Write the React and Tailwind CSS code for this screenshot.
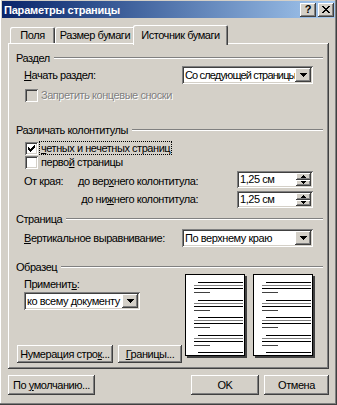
import React from "react";

const RAISED =
  "shadow-[inset_-1px_-1px_#404040,inset_1px_1px_#ffffff,inset_-2px_-2px_#808080,inset_2px_2px_#d4d0c8]";
const SUNKEN =
  "shadow-[inset_1px_1px_#808080,inset_-1px_-1px_#ffffff,inset_2px_2px_#404040,inset_-2px_-2px_#d4d0c8]";

function U({ children }) {
  return <span className="underline decoration-1 underline-offset-[1px]">{children}</span>;
}

function Header({ children }) {
  return (
    <div className="flex items-center h-[12px]">
      <span className="whitespace-nowrap">{children}</span>
      <div className="flex-1 ml-[4px] h-[2px] border-t border-b border-t-[#808080] border-b-white" />
    </div>
  );
}

function DownTri() {
  return (
    <svg width="7" height="4" shapeRendering="crispEdges">
      <path d="M0 0h7v1h-1v1h-1v1h-1v1h-1v-1h-1v-1h-1v-1h-1z" fill="#000" />
    </svg>
  );
}

function Select({ value, className, textClass = "" }) {
  return (
    <div className={`flex items-center h-[18px] bg-white p-[2px] ${SUNKEN} ${className}`}>
      <span className={`flex-1 pl-[1px] whitespace-nowrap overflow-hidden leading-[14px] ${textClass}`}>{value}</span>
      <div className={`w-[16px] h-full shrink-0 bg-[#d4d0c8] flex items-center justify-center ${RAISED}`}>
        <DownTri />
      </div>
    </div>
  );
}

function Spin({ value }) {
  return (
    <div className={`flex h-[17px] w-[76px] bg-white p-[2px] ${SUNKEN}`}>
      <span className="flex-1 pl-[1px] leading-[13px] whitespace-nowrap">{value}</span>
      <div className="flex flex-col w-[15px]">
        <div className={`flex-1 flex items-center justify-center bg-[#d4d0c8] ${RAISED}`}>
          <svg width="5" height="3" shapeRendering="crispEdges">
            <path d="M2 0h1v1h1v1h1v1h-5v-1h1v-1h1z" fill="#000" />
          </svg>
        </div>
        <div className={`flex-1 flex items-center justify-center bg-[#d4d0c8] ${RAISED}`}>
          <svg width="5" height="3" shapeRendering="crispEdges">
            <path d="M0 0h5v1h-1v1h-1v1h-1v-1h-1v-1h-1z" fill="#000" />
          </svg>
        </div>
      </div>
    </div>
  );
}

const CHECK = [
  [6, 0], [5, 1], [6, 1], [0, 2], [4, 2], [5, 2], [6, 2],
  [0, 3], [1, 3], [3, 3], [4, 3], [5, 3],
  [0, 4], [1, 4], [2, 4], [3, 4], [4, 4],
  [1, 5], [2, 5], [3, 5], [2, 6],
];

function Check({ checked, disabled }) {
  return (
    <div
      className={`w-[13px] h-[13px] shrink-0 flex items-center justify-center ${
        disabled ? "bg-[#d4d0c8]" : "bg-white"
      } ${SUNKEN}`}
    >
      {checked && (
        <svg width="7" height="7" shapeRendering="crispEdges">
          {CHECK.map(([x, y]) => (
            <rect key={`${x}-${y}`} x={x} y={y} width="1" height="1" fill="#000" />
          ))}
        </svg>
      )}
    </div>
  );
}

function Btn({ children, className }) {
  return (
    <div className={`flex items-center justify-center bg-[#d4d0c8] whitespace-nowrap ${RAISED} ${className}`}>
      <span>{children}</span>
    </div>
  );
}

function Page() {
  const paras = [7, 25, 42, 60, 77];
  return (
    <div className="w-[60px] h-[82px] bg-white border border-black shadow-[2px_2px_0_#404040]">
      <svg width="58" height="80" shapeRendering="crispEdges">
        {paras.map((p) => (
          <g key={p}>
            <rect x="12" y={p} width="45" height="1" fill="#000" />
            <rect x="8" y={p + 3} width="49" height="1" fill="#808080" />
            <rect x="8" y={p + 6} width="49" height="1" fill="#000" />
            <rect x="8" y={p + 10} width="16" height="1" fill="#404040" />
          </g>
        ))}
      </svg>
    </div>
  );
}

export default function App() {
  return (
    <div
      className="w-[337px] h-[405px] bg-[#d4d0c8] flex flex-col pt-[1px] px-[2px] pb-[2px] text-[11px] tracking-[-0.45px] text-black shadow-[inset_-1px_-1px_#404040,inset_-2px_-2px_#808080,inset_1px_0_#ffffff]"
      style={{ fontFamily: '"Liberation Sans", Arial, sans-serif' }}
    >
      {/* Title bar */}
      <div className="h-[17px] flex items-center pl-[2px] pr-[1px] bg-gradient-to-r from-[#0a246a] to-[#a6caf0]">
        <span className="flex-1 font-bold text-white leading-[14px] whitespace-nowrap tracking-[-0.2px]">
          Параметры страницы
        </span>
        <div className="flex gap-[2px]">
          <Btn className="w-[16px] h-[14px]">
            <span className="font-bold text-[11px] leading-[11px]">?</span>
          </Btn>
          <Btn className="w-[16px] h-[14px]">
            <svg width="8" height="7" shapeRendering="crispEdges" className="block">
              <path
                d="M0 0h2v1h1v1h2v-1h1v-1h2v1h-1v1h-1v1h-1v1h1v1h1v1h1v1h-2v-1h-1v-1h-2v1h-1v1h-2v-1h1v-1h1v-1h1v-1h-1v-1h-1v-1h-1z"
                fill="#000"
              />
            </svg>
          </Btn>
        </div>
      </div>

      {/* Body */}
      <div className="flex-1 flex flex-col px-[6px] pt-[7px]">
        {/* Tabs */}
        <div className="flex items-end h-[18px] ml-[2px]">
          <div className="w-[45px] h-[16px] pt-[1px] flex items-center justify-center rounded-t-[2px] shadow-[inset_1px_1px_#ffffff,inset_-1px_0_#404040,inset_-2px_0_#808080]">
            Поля
          </div>
          <div className="w-[80px] h-[16px] pt-[1px] flex items-center justify-center rounded-t-[2px] shadow-[inset_1px_1px_#ffffff,inset_-1px_0_#404040,inset_-2px_0_#808080]">
            Размер бумаги
          </div>
          <div className="relative z-10 -ml-[2px] -mb-[2px] w-[95px] h-[20px] flex items-center justify-center bg-[#d4d0c8] rounded-t-[2px] shadow-[inset_1px_1px_#ffffff,inset_-1px_0_#404040,inset_-2px_0_#808080]">
            Источник бумаги
          </div>
        </div>

        {/* Panel */}
        <div className={`h-[326px] flex flex-col pt-[9px] pl-[8px] pr-[6px] ${RAISED}`}>
          <Header>Раздел</Header>

          <div className="mt-[2px] h-[18px] flex items-center">
            <span className="ml-[8px]">
              <U>Н</U>ачать раздел:
            </span>
            <Select
              value="Со следующей страницы"
              textClass="tracking-[-0.85px]"
              className="ml-auto mr-[10px] w-[131px]"
            />
          </div>

          <div className="mt-[5px] h-[13px] flex items-center">
            <div className="ml-[9px]">
              <Check disabled />
            </div>
            <span className="ml-[3px] text-[#808080] [text-shadow:1px_1px_0_#ffffff]">
              Запретить концевые сноски
            </span>
          </div>

          <div className="mt-[22px]">
            <Header>Различать колонтитулы</Header>
          </div>

          <div className="mt-[5px] h-[14px] flex items-center">
            <div className="ml-[9px]">
              <Check checked />
            </div>
            <span className="ml-[1px] px-[1px] leading-[12px] border border-dotted border-black">
              <U>ч</U>етных и нечетных страниц
            </span>
          </div>

          <div className="h-[14px] flex items-center">
            <div className="ml-[9px]">
              <Check />
            </div>
            <span className="ml-[2px] px-[1px]">
              перво<U>й</U> страницы
            </span>
          </div>

          <div className="mt-[2px] h-[17px] flex items-center">
            <span className="ml-[8px] w-[47px] pt-[3px]">От края:</span>
            <span className="w-[127px] text-right pt-[3px] whitespace-nowrap">
              до вер<U>х</U>него колонтитула:
            </span>
            <div className="ml-auto mr-[10px]">
              <Spin value="1,25 см" />
            </div>
          </div>

          <div className="mt-[3px] h-[17px] flex items-center">
            <span className="ml-[8px] w-[47px]" />
            <span className="w-[127px] text-right whitespace-nowrap">
              до ни<U>ж</U>него колонтитула:
            </span>
            <div className="ml-auto mr-[10px]">
              <Spin value="1,25 см" />
            </div>
          </div>

          <div className="mt-[5px]">
            <Header>Страница</Header>
          </div>

          <div className="mt-[4px] h-[18px] flex items-center">
            <span className="ml-[8px]">
              <U>В</U>ертикальное выравнивание:
            </span>
            <Select value="По верхнему краю" className="ml-auto mr-[10px] w-[131px]" />
          </div>

          <div className="mt-[14px]">
            <Header>Образец</Header>
          </div>

          <div className="flex">
            <div className="w-[169px] flex flex-col">
              <div className="mt-[5px] h-[12px] flex items-center ml-[8px]">
                <span>
                  Применит<U>ь</U>:
                </span>
              </div>
              <Select value="ко всему документу" className="mt-[2px] ml-[8px] w-[116px]" />
              <div className="mt-[35px] ml-[1px] flex gap-[5px]">
                <Btn className="w-[96px] h-[18px]">
                  Нумерация стро<U>к</U>...
                </Btn>
                <Btn className="w-[64px] h-[18px]">
                  <U>Г</U>раницы...
                </Btn>
              </div>
            </div>
            <div className="pt-[1px] flex gap-[8px]">
              <Page />
              <Page />
            </div>
          </div>
        </div>

        {/* Bottom buttons */}
        <div className="mt-[6px] flex">
          <Btn className="w-[87px] h-[20px]">
            По <U>у</U>молчанию...
          </Btn>
          <Btn className="ml-auto w-[68px] h-[20px]">OK</Btn>
          <Btn className="ml-[5px] w-[65px] h-[20px]">Отмена</Btn>
        </div>
      </div>
    </div>
  );
}
